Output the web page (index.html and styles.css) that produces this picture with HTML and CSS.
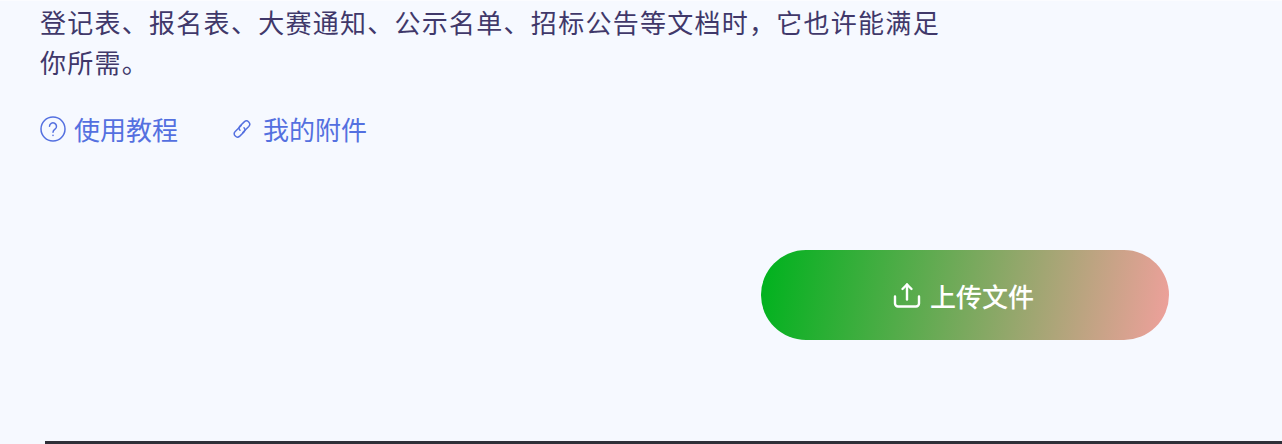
FILE: index.html
```html
<!DOCTYPE html>
<html lang="zh-CN">
<head>
    <meta charset="UTF-8">
    <meta name="viewport" content="width=device-width, initial-scale=1.0">
    <title>上传文件</title>
    <link rel="stylesheet" href="styles.css">
</head>
<body>
    <div class="page">
        <div class="intro">
            <p class="desc">登记表、报名表、大赛通知、公示名单、招标公告等文档时，它也许能满足<br>你所需。</p>
            <div class="links">
                <a href="#" class="link">
                    <svg class="icon-help" viewBox="0 0 26 26" fill="none" stroke="currentColor" stroke-width="1.500" stroke-linecap="round">
                        <circle cx="13" cy="13" r="12"/>
                        <path d="M9.500 10.300a3.500 3.500 0 1 1 5.500 2.900c-1.200.8-2 1.500-2 3"/>
                        <path d="M13 19.200v.4"/>
                    </svg>
                    使用教程
                </a>
                <a href="#" class="link link-files">
                    <svg class="icon-clip" viewBox="0 0 18 18" fill="none" stroke="currentColor" stroke-width="1.300" stroke-linecap="round">
                        <path d="M8.300 5.900 2.900 11.300a2.900 2.900 0 0 0 4.100 4.100l3.800-3.800a2.800 2.800 0 0 0 0-3.800"/>
                        <path d="M9.700 12.100l5.400-5.400A2.900 2.900 0 0 0 11 2.600L7.200 6.400a2.800 2.800 0 0 0 0 3.800"/>
                    </svg>
                    我的附件
                </a>
            </div>
        </div>
        <div class="actions">
            <a href="#" class="btn-upload">
                <svg class="icon-upload" viewBox="0 0 28 28" fill="none" stroke="currentColor" stroke-width="2.400" stroke-linecap="round" stroke-linejoin="round">
                    <path d="M14 18.500V3.500"/>
                    <path d="M9.500 8 14 3.500 18.500 8"/>
                    <path d="M2 15.500v7a3 3 0 0 0 3 3h18a3 3 0 0 0 3-3v-7"/>
                </svg>
                上传文件
            </a>
        </div>
        <div class="bottom-bar"></div>
    </div>
</body>
</html>
```

FILE: styles.css
```css
html, body {
    margin: 0;
    height: 100%;
}

body {
    font-family: "Noto Sans CJK SC", "Liberation Sans", sans-serif;
    background-color: #f6f9ff;
    overflow: hidden;
}

.page {
    display: flex;
    flex-direction: column;
    height: 444px;
    box-sizing: border-box;
    border-top: 1px solid #fbfcff;
}

.intro {
    padding: 1px 0 0 40px;
}

.desc {
    margin: 0;
    font-size: 26px;
    line-height: 40px;
    letter-spacing: 1.270px;
    color: #40386a;
}

.links {
    display: flex;
    align-items: center;
    margin-top: 29px;
}

.link {
    display: flex;
    align-items: center;
    gap: 8px;
    font-size: 26px;
    line-height: 36px;
    color: #5470e0;
    text-decoration: none;
}

.link-files {
    margin-left: 54px;
    gap: 11px;
}

.icon-help {
    width: 26px;
    height: 26px;
}

.icon-clip {
    width: 20px;
    height: 20px;
}

.actions {
    display: flex;
    justify-content: flex-end;
    margin-top: 103px;
    padding-right: 113px;
}

.btn-upload {
    display: flex;
    align-items: center;
    justify-content: center;
    gap: 9px;
    width: 408px;
    height: 90px;
    padding-right: 3px;
    box-sizing: border-box;
    border-radius: 45px;
    background: linear-gradient(100deg, #02b21f 2%, #f0a09c 100%);
    color: #fff;
    font-size: 26px;
    font-weight: 500;
    text-decoration: none;
}

.icon-upload {
    width: 28px;
    height: 28px;
}

.bottom-bar {
    margin: auto 0 0 45px;
    height: 3px;
    background-color: #2e2f38;
}
```
